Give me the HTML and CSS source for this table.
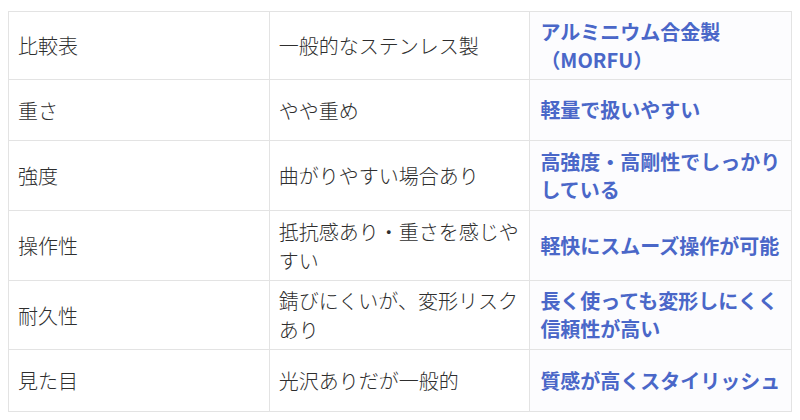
FILE: index.html
```html
<!DOCTYPE html>
<html lang="ja">
<head>
<meta charset="utf-8">
<link rel="stylesheet" href="styles.css">
</head>
<body>
<table class="cmp">
  <tr class="r1"><td>比較表</td><td>一般的なステンレス製</td><td class="hl">アルミニウム合金製<br>（MORFU）</td></tr>
  <tr class="r2"><td>重さ</td><td>やや重め</td><td class="hl">軽量で扱いやすい</td></tr>
  <tr class="r3"><td>強度</td><td>曲がりやすい場合あり</td><td class="hl">高強度・高剛性でしっかりしている</td></tr>
  <tr class="r4"><td>操作性</td><td>抵抗感あり・重さを感じやすい</td><td class="hl">軽快にスムーズ操作が可能</td></tr>
  <tr class="r5"><td>耐久性</td><td>錆びにくいが、変形リスクあり</td><td class="hl">長く使っても変形しにくく信頼性が高い</td></tr>
  <tr class="r6"><td>見た目</td><td>光沢ありだが一般的</td><td class="hl">質感が高くスタイリッシュ</td></tr>
</table>
</body>
</html>
```
FILE: styles.css
```css
html, body {
  margin: 0;
  background: #ffffff;
}
body {
  padding: 11px 0 0 8px;
  font-family: "Noto Sans CJK JP", "Noto Sans", sans-serif;
}
.cmp {
  border-collapse: collapse;
  table-layout: fixed;
  width: 784px;
}
.cmp td {
  width: 33.33%;
  border: 1px solid #e3e3e3;
  padding: 0 8px 0 9px;
  vertical-align: middle;
  font-size: 20px;
  line-height: 29px;
  font-weight: 300;
  color: #2e2e2e;
  word-break: break-all;
}
.cmp td.hl {
  background: #fcfcfe;
  color: #4a67c8;
  font-weight: 700;
  line-height: 28px;
  padding-left: 10px;
}
.r1 { height: 68px; }
.r2 { height: 61px; }
.r3 { height: 70px; }
.r4 { height: 70px; }
.r5 { height: 69px; }
.r6 { height: 62px; }
```
